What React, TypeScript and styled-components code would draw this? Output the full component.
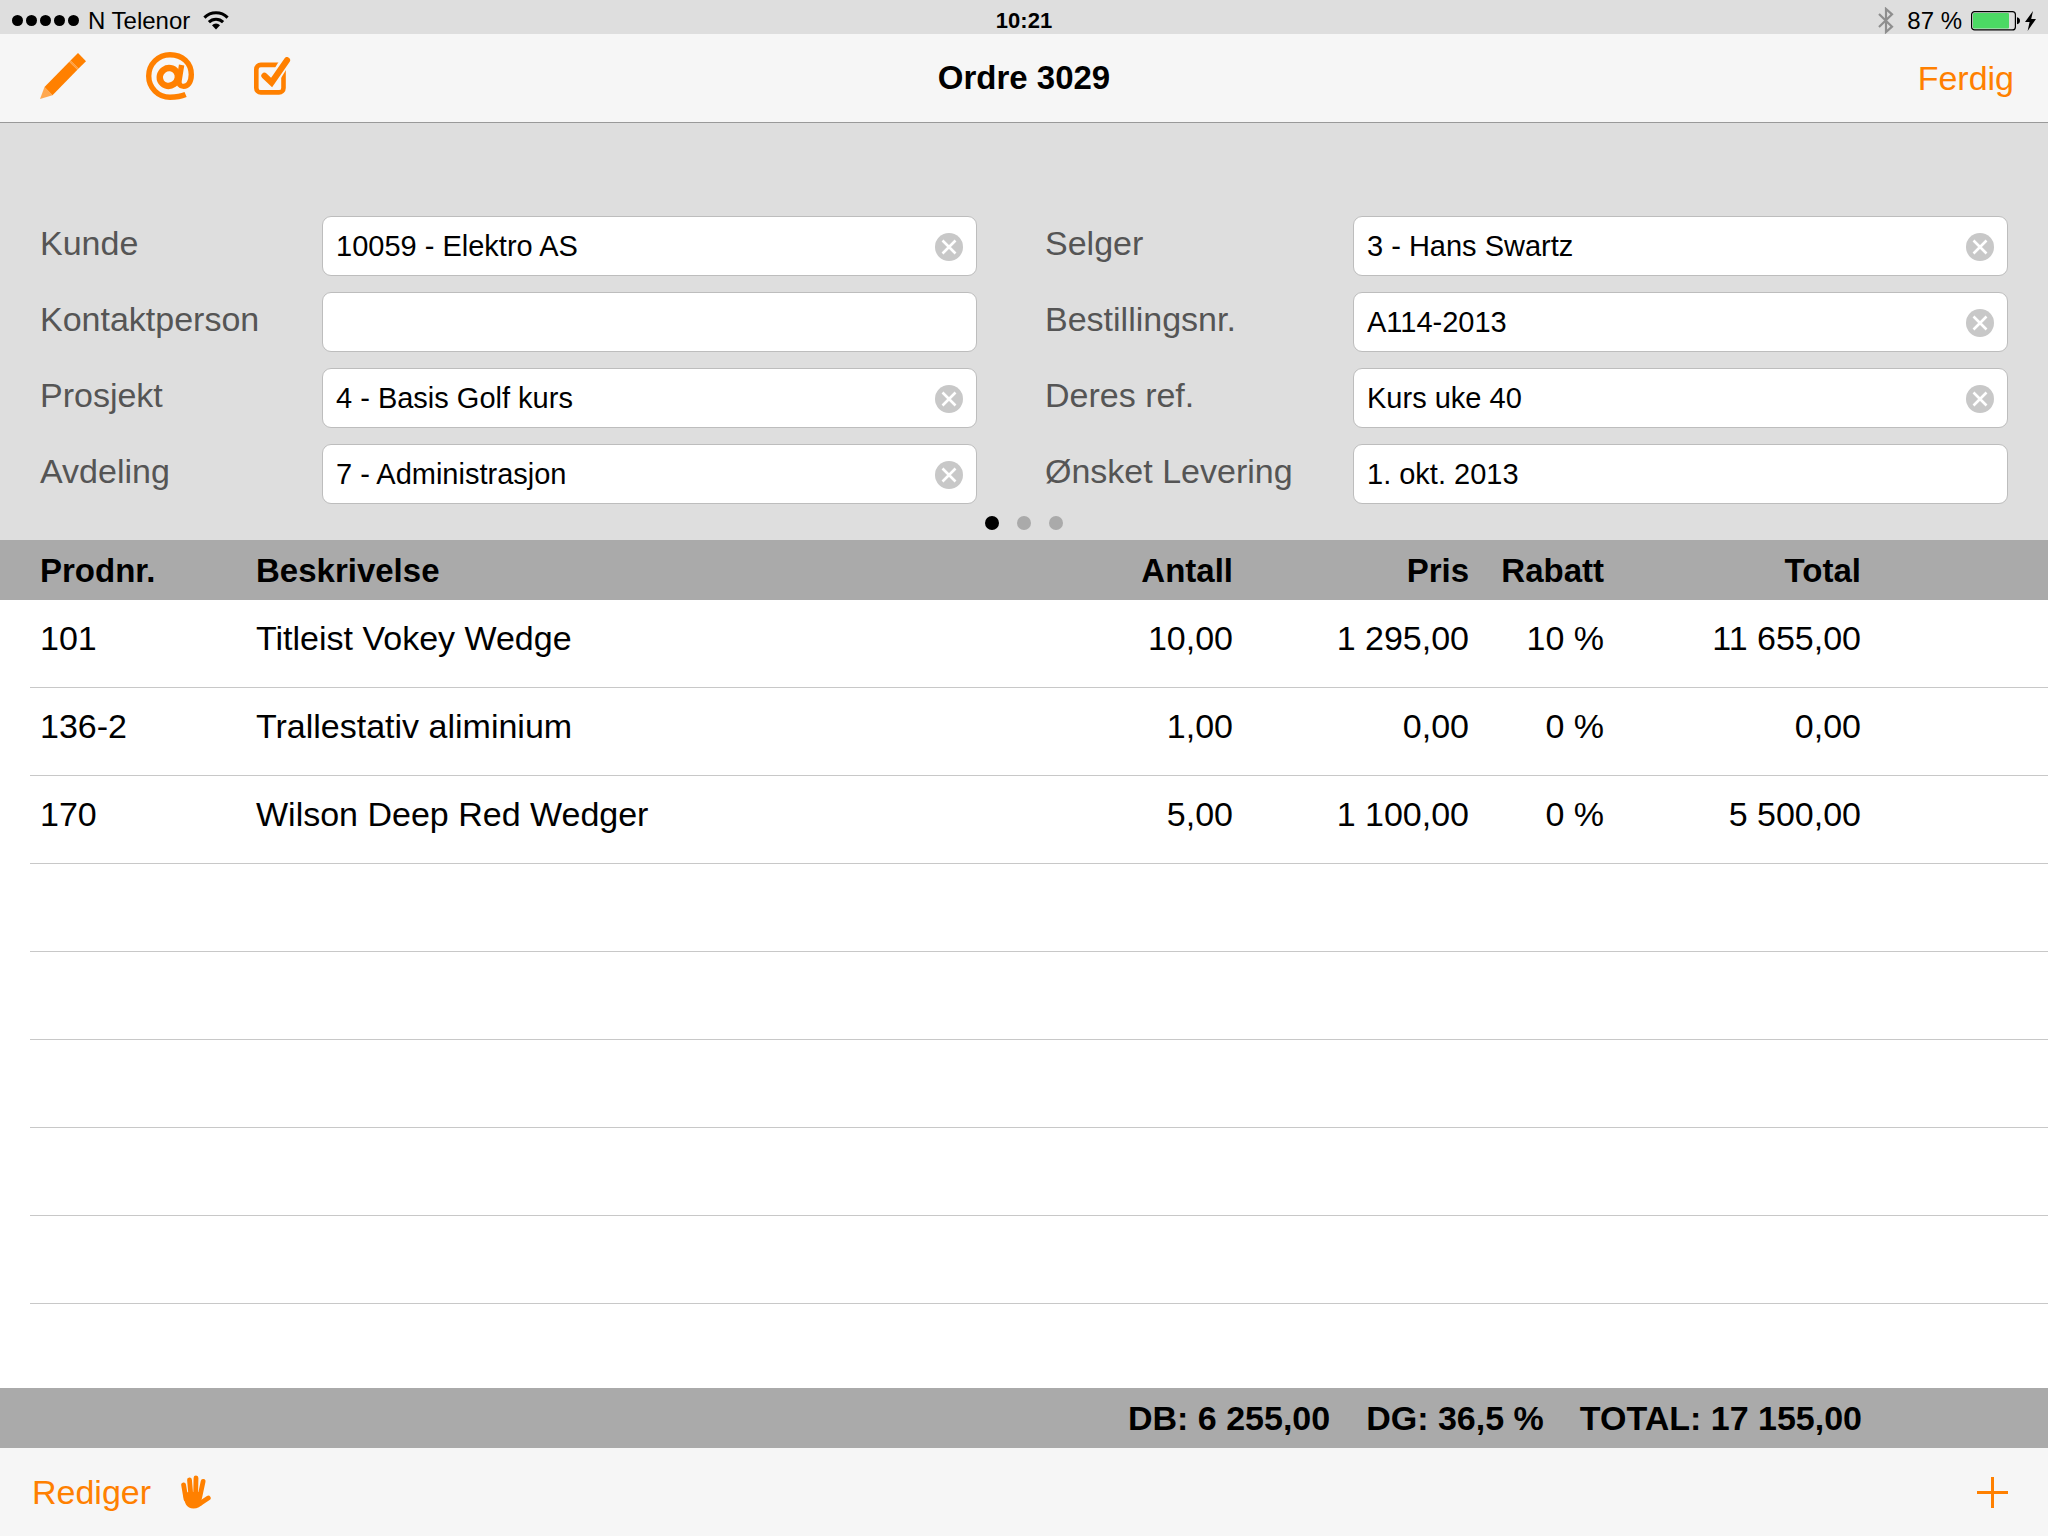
import React, { useState } from "react";
import styled, { createGlobalStyle } from "styled-components";

const color = {
  accent: "#ff8000",
  chrome: "#f6f6f6",
  panel: "#dedede",
  band: "#aaaaaa",
  line: "#c8c8c8",
  label: "#555555",
};

const GlobalStyle = createGlobalStyle`
  *, *::before, *::after { box-sizing: border-box; }
  body {
    margin: 0;
    background: #ffffff;
    color: #000000;
    font-family: "Liberation Sans", Arial, Helvetica, sans-serif;
    font-size: 34px;
    line-height: 40px;
  }
  button, input { font: inherit; color: inherit; }
`;

const Page = styled.div`
  min-height: 100vh;
  display: flex;
  flex-direction: column;
`;

/* Status bar */

const StatusBar = styled.div`
  display: grid;
  grid-template-columns: 1fr auto 1fr;
  align-items: center;
  height: 34px;
  padding: 7px 12px 0;
  background: ${color.panel};
  font-size: 24px;
  line-height: 26px;
  white-space: nowrap;
`;

const StatusGroup = styled.div<{ $end?: boolean }>`
  display: flex;
  align-items: center;
  justify-content: ${(p) => (p.$end ? "flex-end" : "flex-start")};
  gap: 9px;
`;

const Signal = styled.div`
  display: flex;
  gap: 3px;
`;

const SignalDot = styled.span`
  width: 11px;
  height: 11px;
  border-radius: 50%;
  background: #000000;
`;

const Carrier = styled.span`
  margin-right: 4px;
`;

const Clock = styled.time`
  font-size: 22px;
  font-weight: 700;
`;

const BatteryLevel = styled.span`
  margin-left: 4px;
`;

const Battery = styled.span`
  display: flex;
  align-items: center;
  gap: 5px;
`;

/* Navigation bar */

const NavBar = styled.header`
  display: grid;
  grid-template-columns: 1fr auto 1fr;
  align-items: center;
  height: 89px;
  padding: 0 34px;
  background: ${color.chrome};
  border-bottom: 1px solid #999999;
`;

const NavIcons = styled.div`
  display: flex;
  align-items: center;
  gap: 60px;
  padding: 0 0 4px 6px;
`;

const Title = styled.h1`
  margin: 0;
  font-size: 33px;
  line-height: 42px;
  font-weight: 700;
`;

const BarButton = styled.button`
  display: inline-flex;
  align-items: center;
  padding: 0;
  border: 0;
  background: none;
  color: ${color.accent};
  cursor: pointer;
`;

const DoneButton = styled(BarButton)`
  justify-self: end;
`;

/* Order form */

const OrderForm = styled.form`
  padding: 93px 40px 0;
  background: ${color.panel};
`;

const FieldColumns = styled.div`
  display: flex;
  gap: 68px;
`;

const FieldColumn = styled.div<{ $label: number }>`
  flex: 1 1 ${(p) => p.$label}px;
  display: grid;
  grid-template-columns: ${(p) => p.$label}px 1fr;
  row-gap: 16px;
`;

const FieldLabel = styled.label`
  align-self: center;
  padding-bottom: 6px;
  color: ${color.label};
`;

const FieldBox = styled.div`
  display: flex;
  align-items: center;
  height: 60px;
  padding: 0 13px;
  background: #ffffff;
  border: 1px solid #bdbdbd;
  border-radius: 9px;
`;

const FieldInput = styled.input`
  flex: 1;
  min-width: 0;
  height: 56px;
  padding: 0;
  border: 0;
  outline: 0;
  background: none;
  font-size: 29px;
`;

const ClearButton = styled.button`
  display: flex;
  padding: 2px 0 0;
  border: 0;
  background: none;
  cursor: pointer;
`;

const PageDots = styled.div`
  display: flex;
  align-items: center;
  justify-content: center;
  gap: 18px;
  height: 36px;
  padding-top: 2px;
`;

const PageDot = styled.button<{ $active: boolean }>`
  width: 14px;
  height: 14px;
  padding: 0;
  border: 0;
  border-radius: 50%;
  background: ${(p) => (p.$active ? "#000000" : color.band)};
  cursor: pointer;
`;

/* Order lines */

const Lines = styled.main`
  flex: 1;
`;

const LineTable = styled.table`
  width: 100%;
  table-layout: fixed;
  border-collapse: collapse;
  white-space: nowrap;
`;

const Col = styled.col<{ $width?: number }>`
  width: ${(p) => (p.$width ? `${p.$width}px` : "auto")};
`;

const HeadRow = styled.tr`
  height: 60px;
  background: ${color.band};
`;

const LineRow = styled.tr`
  height: 88px;
  background: linear-gradient(${color.line}, ${color.line}) 30px 100% / 100% 1px no-repeat;
`;

const HeadCell = styled.th<{ $numeric?: boolean }>`
  padding: 2px 0 0;
  font-size: 33px;
  font-weight: 700;
  text-align: ${(p) => (p.$numeric ? "right" : "left")};

  &:first-child { padding-left: 40px; }
`;

const Cell = styled.td<{ $numeric?: boolean }>`
  padding: 0 0 13px;
  text-align: ${(p) => (p.$numeric ? "right" : "left")};

  &:first-child { padding-left: 40px; }
`;

/* Totals and bottom toolbar */

const Totals = styled.div`
  display: flex;
  align-items: center;
  justify-content: flex-end;
  gap: 36px;
  height: 60px;
  padding-right: 186px;
  background: ${color.band};
  font-weight: 700;
  white-space: nowrap;
`;

const Toolbar = styled.footer`
  display: flex;
  align-items: center;
  justify-content: space-between;
  height: 88px;
  padding: 0 40px 0 32px;
  background: ${color.chrome};
`;

const ToolGroup = styled.div`
  display: flex;
  align-items: center;
  gap: 30px;
`;

/* Icons */

const WifiIcon = () => (
  <svg width="26" height="19" viewBox="0 0 26 19" aria-hidden="true">
    <g fill="none" stroke="#000" strokeWidth="3">
      <path d="M1.4 6.6 A16.4 16.4 0 0 1 24.6 6.6" />
      <path d="M5.9 11.1 A10 10 0 0 1 20.1 11.1" />
    </g>
    <path d="M9 14.2 A5.6 5.6 0 0 1 17 14.2 L13 18.4 Z" />
  </svg>
);

const BluetoothIcon = () => (
  <svg width="16" height="27" viewBox="0 0 16 27" aria-hidden="true">
    <path
      d="M1 7 L14 19.6 L8 25 V2 L14 7.4 L1 20"
      fill="none"
      stroke="#8e8e8e"
      strokeWidth="2.2"
    />
  </svg>
);

const BatteryIcon = () => (
  <svg width="49" height="20" viewBox="0 0 49 20" aria-hidden="true">
    <rect x="0.6" y="0.6" width="43.8" height="18.3" rx="3" fill="none" stroke="#000" strokeWidth="1.2" />
    <rect x="2" y="2" width="36" height="15.5" rx="1" fill="#4cd964" />
    <path d="M46 6.3 C48 6.8 49 8 49 9.8 C49 11.6 48 12.8 46 13.3 Z" />
  </svg>
);

const BoltIcon = () => (
  <svg width="11" height="20" viewBox="0 0 11 20" aria-hidden="true">
    <path d="M8 0 L0 11 H4.6 L2.6 20 L11 8 H6.2 Z" />
  </svg>
);

const PencilIcon = () => (
  <svg width="46" height="46" viewBox="0 0 46 46" aria-hidden="true">
    <path d="M0 46 L4.5 34 L12.5 42.3 Z" fill="#ffa850" />
    <path d="M4.5 34 L29.3 8.7 L37.4 16.8 L12.5 42.3 Z" fill={color.accent} />
    <path d="M29.3 8.7 L30.5 7.5 L38.6 15.6 L37.4 16.8 Z" fill="#ff9c3a" />
    <path d="M30.5 7.5 L38 0 L46 8.3 L38.6 15.6 Z" fill={color.accent} />
  </svg>
);

const MailIcon = () => (
  <svg width="48" height="48" viewBox="0 0 48 48" fill="none" stroke={color.accent} aria-hidden="true">
    <path
      d="M39.6 42.6 C35 44.6 30 45.3 24 45.3 A21.3 21.3 0 0 1 24 2.7 C36.4 2.7 45.3 11 45.3 22.6 C45.3 30.6 41.6 34.4 37.6 34.4 C34 34.4 32.5 32 33.1 28.6 L35.6 13"
      strokeWidth="5.4"
    />
    <ellipse cx="22.8" cy="25" rx="9.2" ry="8.8" strokeWidth="6.4" transform="rotate(-35 22.8 25)" />
  </svg>
);

const CheckIcon = () => (
  <svg width="37" height="38" viewBox="0 0 37 38" fill="none" aria-hidden="true">
    <rect x="2.3" y="7.9" width="27.2" height="27.5" rx="4.5" stroke={color.accent} strokeWidth="4.6" />
    <path d="M17.7 26 L34.5 -1" stroke={color.chrome} strokeWidth="10.5" />
    <path
      d="M10.4 18.8 L17.6 25.6 L33 3.2"
      stroke={color.accent}
      strokeWidth="6.2"
      strokeLinecap="round"
      strokeLinejoin="miter"
    />
  </svg>
);

const HandIcon = () => (
  <svg width="30" height="34" viewBox="0 0 30 34" aria-hidden="true">
    <g fill="none" stroke={color.accent} strokeLinecap="round" strokeWidth="4.8">
      <path d="M2.6 9.8 L5 24" />
      <path d="M8.5 4.9 L10 22" />
      <path d="M15 3 L14.6 22" />
      <path d="M22.1 6.4 L18.8 22" />
      <path d="M27.3 23 L19 28.4" />
    </g>
    <path
      d="M2.3 18 L8 17 H20.8 L20.6 24.5 L22 28.5 C19.5 32 16.5 33.4 12.5 33.4 C5.5 33.4 3.2 28.5 2.3 18 Z"
      fill={color.accent}
    />
  </svg>
);

const PlusIcon = () => (
  <svg width="31" height="31" viewBox="0 0 31 31" aria-hidden="true">
    <path d="M15.5 0 V31 M0 15.5 H31" stroke={color.accent} strokeWidth="3" />
  </svg>
);

const ClearIcon = () => (
  <svg width="28" height="28" viewBox="0 0 28 28" aria-hidden="true">
    <circle cx="14" cy="14" r="14" fill="#c8c8c8" />
    <path d="M7.5 7.5 L20.5 20.5 M20.5 7.5 L7.5 20.5" stroke="#fff" strokeWidth="2.6" />
  </svg>
);

/* Data */

type FieldData = { id: string; label: string; value: string; clearable?: boolean };

const leftFields: FieldData[] = [
  { id: "kunde", label: "Kunde", value: "10059 - Elektro AS", clearable: true },
  { id: "kontaktperson", label: "Kontaktperson", value: "", clearable: true },
  { id: "prosjekt", label: "Prosjekt", value: "4 - Basis Golf kurs", clearable: true },
  { id: "avdeling", label: "Avdeling", value: "7 - Administrasjon", clearable: true },
];

const rightFields: FieldData[] = [
  { id: "selger", label: "Selger", value: "3 - Hans Swartz", clearable: true },
  { id: "bestillingsnr", label: "Bestillingsnr.", value: "A114-2013", clearable: true },
  { id: "deresref", label: "Deres ref.", value: "Kurs uke 40", clearable: true },
  { id: "levering", label: "Ønsket Levering", value: "1. okt. 2013" },
];

const orderLines = [
  { nr: "101", text: "Titleist Vokey Wedge", qty: "10,00", price: "1 295,00", discount: "10 %", total: "11 655,00" },
  { nr: "136-2", text: "Trallestativ aliminium", qty: "1,00", price: "0,00", discount: "0 %", total: "0,00" },
  { nr: "170", text: "Wilson Deep Red Wedger", qty: "5,00", price: "1 100,00", discount: "0 %", total: "5 500,00" },
];

const VISIBLE_ROWS = 8;
const blankRows = Array.from({ length: VISIBLE_ROWS - orderLines.length }, (_, i) => i);

function Field({ id, label, value, clearable }: FieldData) {
  const [text, setText] = useState(value);
  return (
    <>
      <FieldLabel htmlFor={id}>{label}</FieldLabel>
      <FieldBox>
        <FieldInput id={id} type="text" value={text} onChange={(e) => setText(e.target.value)} />
        {clearable && text !== "" && (
          <ClearButton type="button" aria-label={`Tøm ${label}`} onClick={() => setText("")}>
            <ClearIcon />
          </ClearButton>
        )}
      </FieldBox>
    </>
  );
}

export default function App() {
  const [page, setPage] = useState(0);

  return (
    <Page>
      <GlobalStyle />
      <StatusBar>
        <StatusGroup>
          <Signal>
            {[0, 1, 2, 3, 4].map((n) => (
              <SignalDot key={n} />
            ))}
          </Signal>
          <Carrier>N Telenor</Carrier>
          <WifiIcon />
        </StatusGroup>
        <Clock>10:21</Clock>
        <StatusGroup $end>
          <BluetoothIcon />
          <BatteryLevel>87 %</BatteryLevel>
          <Battery>
            <BatteryIcon />
            <BoltIcon />
          </Battery>
        </StatusGroup>
      </StatusBar>

      <NavBar>
        <NavIcons>
          <BarButton type="button" aria-label="Rediger ordre">
            <PencilIcon />
          </BarButton>
          <BarButton type="button" aria-label="Send e-post">
            <MailIcon />
          </BarButton>
          <BarButton type="button" aria-label="Oppgaver">
            <CheckIcon />
          </BarButton>
        </NavIcons>
        <Title>Ordre 3029</Title>
        <DoneButton type="button">Ferdig</DoneButton>
      </NavBar>

      <OrderForm>
        <FieldColumns>
          <FieldColumn $label={282}>
            {leftFields.map((f) => (
              <Field key={f.id} {...f} />
            ))}
          </FieldColumn>
          <FieldColumn $label={308}>
            {rightFields.map((f) => (
              <Field key={f.id} {...f} />
            ))}
          </FieldColumn>
        </FieldColumns>
        <PageDots>
          {[0, 1, 2].map((n) => (
            <PageDot
              key={n}
              type="button"
              aria-label={`Side ${n + 1}`}
              $active={n === page}
              onClick={() => setPage(n)}
            />
          ))}
        </PageDots>
      </OrderForm>

      <Lines>
        <LineTable>
          <colgroup>
            <Col $width={256} />
            <Col />
            <Col $width={180} />
            <Col $width={236} />
            <Col $width={135} />
            <Col $width={257} />
            <Col $width={187} />
          </colgroup>
          <thead>
            <HeadRow>
              <HeadCell>Prodnr.</HeadCell>
              <HeadCell>Beskrivelse</HeadCell>
              <HeadCell $numeric>Antall</HeadCell>
              <HeadCell $numeric>Pris</HeadCell>
              <HeadCell $numeric>Rabatt</HeadCell>
              <HeadCell $numeric>Total</HeadCell>
              <HeadCell as="td" />
            </HeadRow>
          </thead>
          <tbody>
            {orderLines.map((l) => (
              <LineRow key={l.nr}>
                <Cell>{l.nr}</Cell>
                <Cell>{l.text}</Cell>
                <Cell $numeric>{l.qty}</Cell>
                <Cell $numeric>{l.price}</Cell>
                <Cell $numeric>{l.discount}</Cell>
                <Cell $numeric>{l.total}</Cell>
                <Cell />
              </LineRow>
            ))}
            {blankRows.map((n) => (
              <LineRow key={n} aria-hidden="true">
                <Cell colSpan={7} />
              </LineRow>
            ))}
          </tbody>
        </LineTable>
      </Lines>

      <Totals>
        <span>DB: 6 255,00</span>
        <span>DG: 36,5 %</span>
        <span>TOTAL: 17 155,00</span>
      </Totals>

      <Toolbar>
        <ToolGroup>
          <BarButton type="button">Rediger</BarButton>
          <BarButton type="button" aria-label="Flytt">
            <HandIcon />
          </BarButton>
        </ToolGroup>
        <BarButton type="button" aria-label="Legg til">
          <PlusIcon />
        </BarButton>
      </Toolbar>
    </Page>
  );
}
